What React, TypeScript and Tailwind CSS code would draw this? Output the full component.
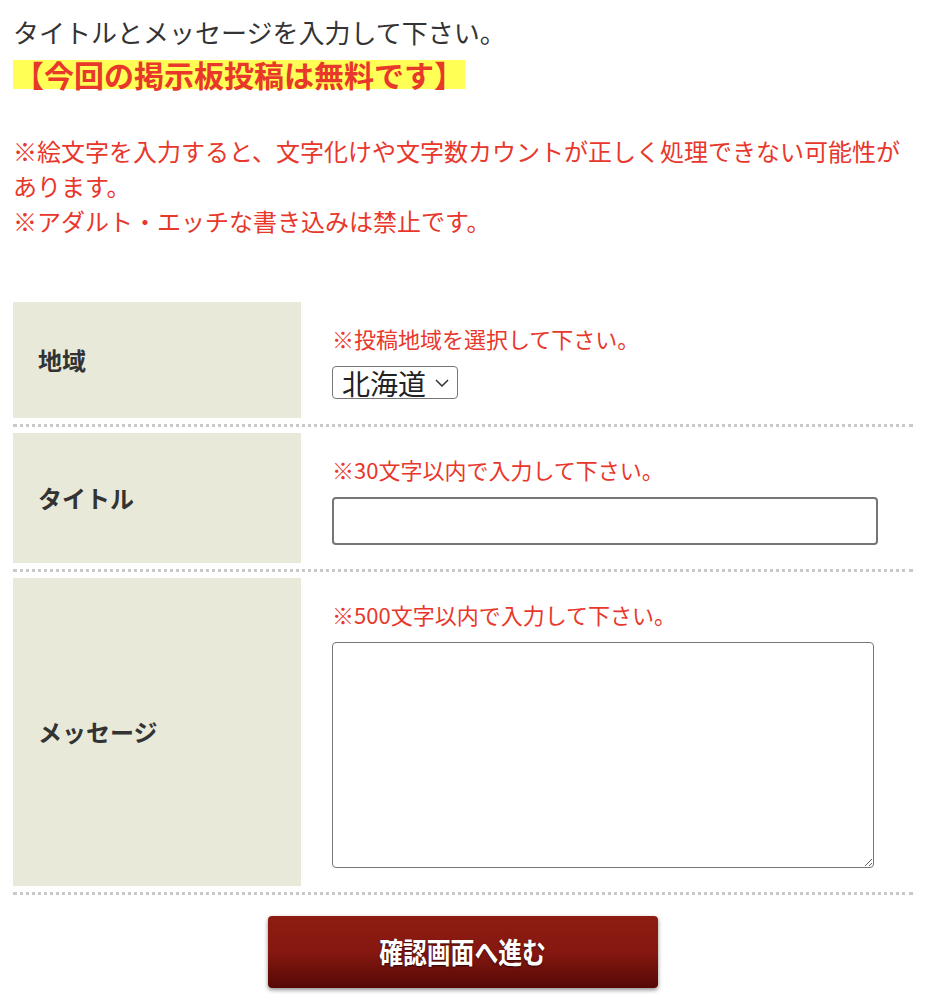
import React from 'react';

const jp = '"Noto Sans CJK JP", "Noto Sans", sans-serif';

function Divider() {
    return <div className="my-[6px] border-t-[3px] border-dotted border-[#c9c9c9]" />;
}

function Row({ label, note, children }: { label: string; note: string; children: React.ReactNode }) {
    return (
        <div className="flex">
            <div className="flex w-[288px] shrink-0 items-center bg-[#e9e9d9] pl-[25px] text-[24px] font-bold text-[#333]">
                {label}
            </div>
            <div className="flex-1 pb-[18px] pl-[31px] pt-5">
                <p className="mb-3 text-[22px] leading-[32px] text-[#e8372b]">{note}</p>
                {children}
            </div>
        </div>
    );
}

export default function App() {
    return (
        <div className="min-h-screen bg-white px-[13px] pt-[14px]" style={{ fontFamily: jp }}>
            <p className="text-[26px] leading-[36px] text-[#333]">タイトルとメッセージを入力して下さい。</p>
            <p className="mt-[10px]">
                <span className="inline-block h-[29px] bg-[#ffff55] pl-px pr-px text-[30px] font-bold leading-[29px] text-[#e8372b]">
                    【今回の掲示板投稿は無料です】
                </span>
            </p>

            <div className="mt-[41px] text-[24px] leading-[35px] text-[#e8372b]">
                <p>※絵文字を入力すると、文字化けや文字数カウントが正しく処理できない可能性があります。</p>
                <p>※アダルト・エッチな書き込みは禁止です。</p>
            </div>

            <div className="mt-[64px]">
                <Row label="地域" note="※投稿地域を選択して下さい。">
                    <div className="relative inline-block">
                        <select
                            defaultValue="hokkaido"
                            className="h-[33px] w-[126px] appearance-none rounded-[4px] border-[1.5px] border-[#767676] bg-white pl-[9px] text-[28px] leading-[30px] text-[#222] outline-none"
                        >
                            <option value="hokkaido">北海道</option>
                            <option value="aomori">青森県</option>
                            <option value="tokyo">東京都</option>
                        </select>
                        <svg
                            className="pointer-events-none absolute right-[9px] top-[13px]"
                            width="14"
                            height="8"
                            viewBox="0 0 14 8"
                            fill="none"
                            stroke="#333"
                            strokeWidth="1.5"
                        >
                            <path d="M1 1l6 6 6-6" />
                        </svg>
                    </div>
                </Row>
                <Divider />
                <Row label="タイトル" note="※30文字以内で入力して下さい。">
                    <input
                        type="text"
                        className="block h-[48px] w-[546px] rounded-[4px] border-2 border-[#767676] bg-white px-2 text-[22px] outline-none"
                    />
                </Row>
                <Divider />
                <Row label="メッセージ" note="※500文字以内で入力して下さい。">
                    <textarea className="block h-[226px] w-[542px] rounded-[4px] border-[1.5px] border-[#767676] bg-white p-2 text-[22px] outline-none" />
                </Row>
                <Divider />
            </div>

            <div className="flex justify-center pb-4 pt-[15px]">
                <button
                    type="button"
                    className="flex h-[72px] w-[390px] items-center justify-center rounded-[4px] bg-gradient-to-b from-[#8e1c12] via-[#861810] to-[#560807] text-white shadow-[0_2px_4px_rgba(0,0,0,0.45)]"
                >
                    <span className="inline-block scale-x-[0.82] text-[29px] font-bold [text-shadow:0_1px_2px_rgba(0,0,0,0.6)]">
                        確認画面へ進む
                    </span>
                </button>
            </div>
        </div>
    );
}
